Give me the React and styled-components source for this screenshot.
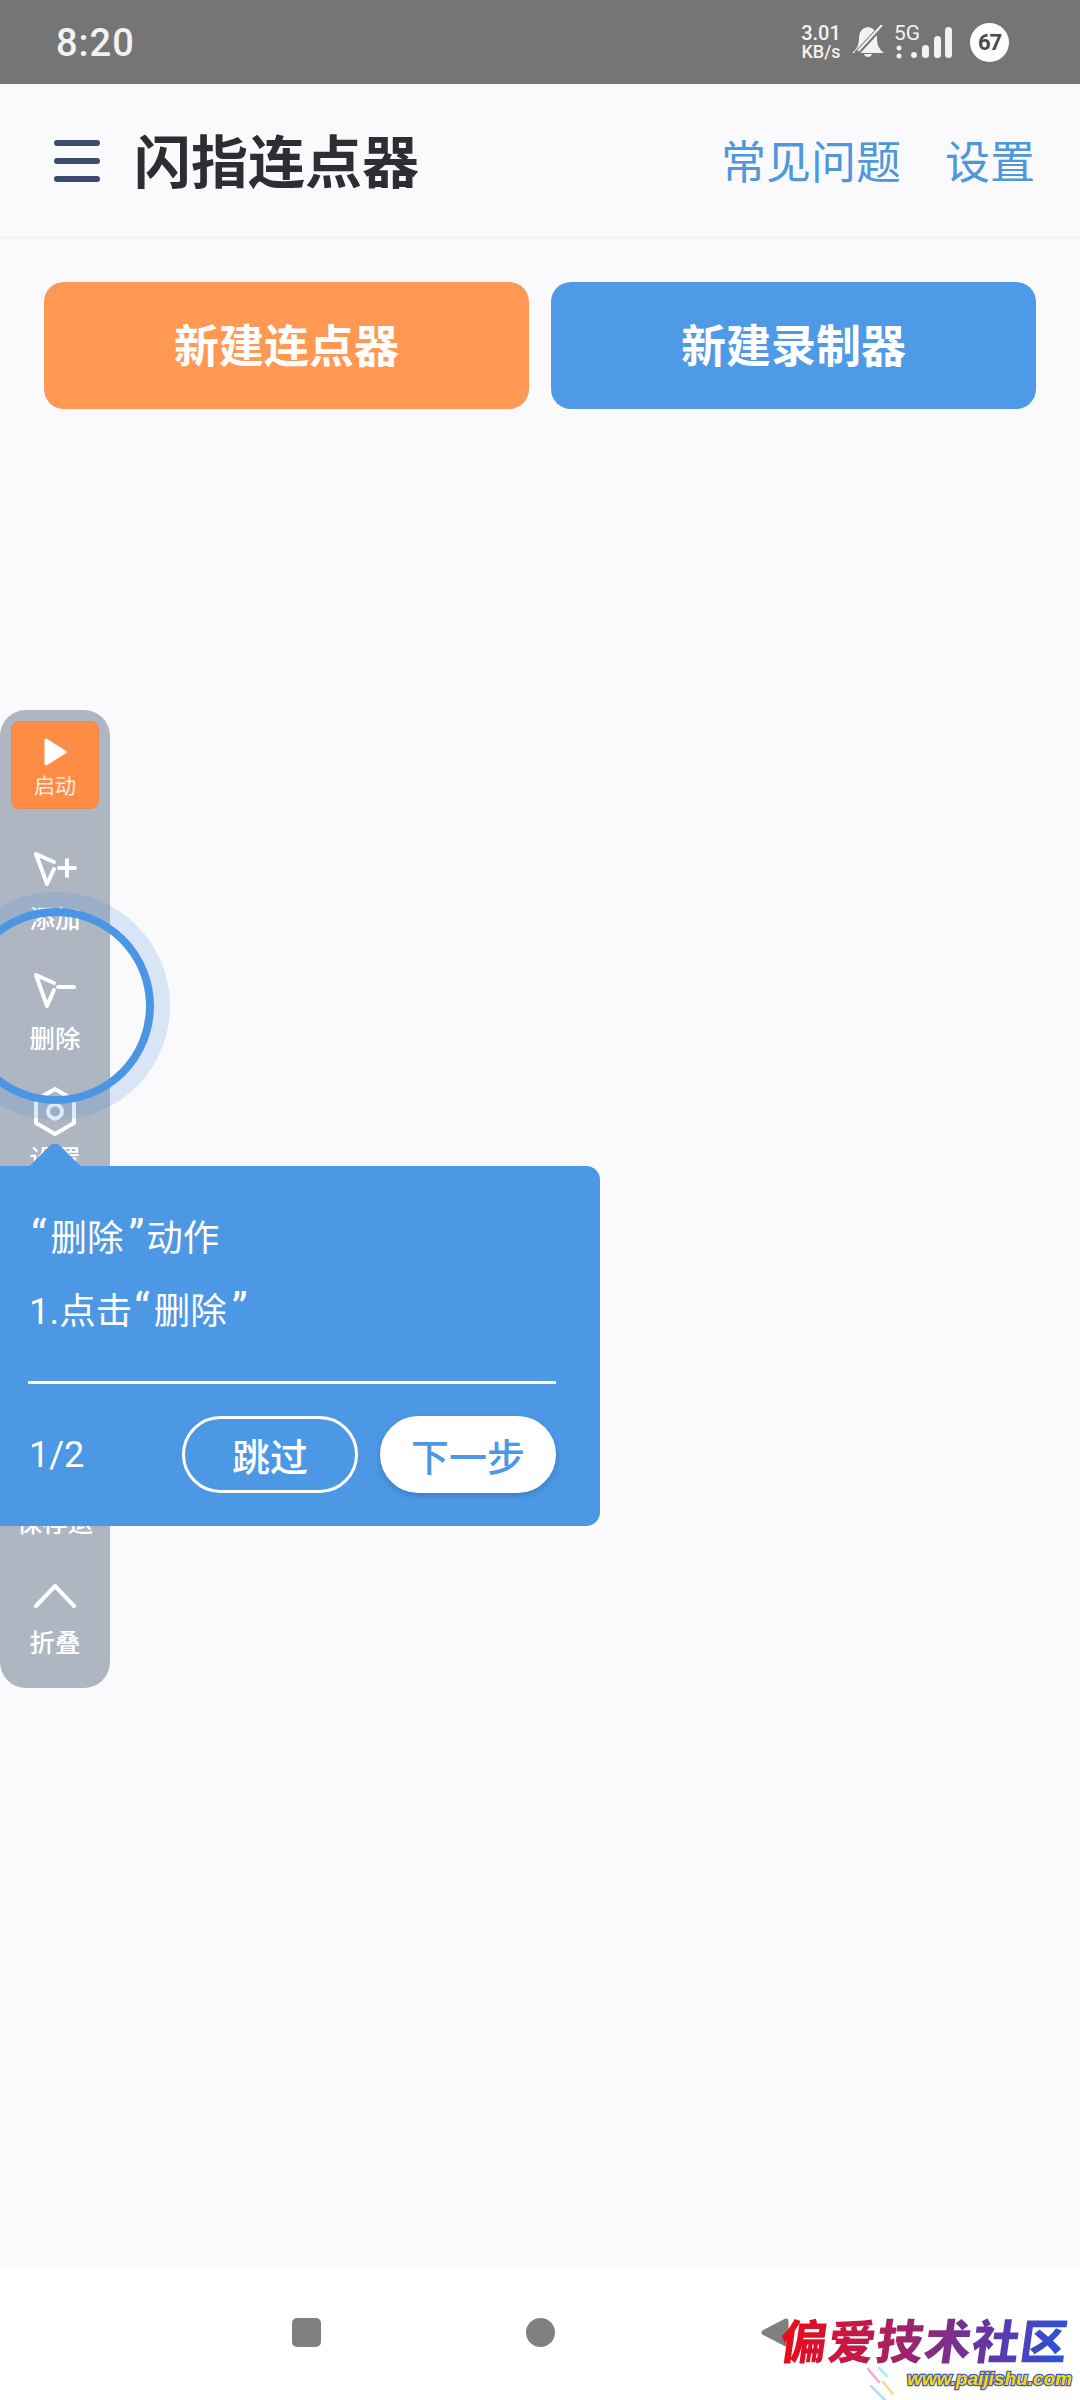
import React from "react";
import styled, { createGlobalStyle } from "styled-components";

const Global = createGlobalStyle`
  html, body { margin: 0; padding: 0; background: #fafafc; }
  * { box-sizing: border-box; }
  body { font-family: Roboto, "Noto Sans CJK SC", sans-serif; }
`;

const Screen = styled.div`
  position: relative;
  width: 1080px;
  height: 2400px;
  overflow: hidden;
  display: flex;
  flex-direction: column;
  background: #fafafc;
`;

const StatusBar = styled.div`
  height: 84px;
  flex: none;
  background: #757575;
  display: flex;
  align-items: center;
  padding: 0 71px 0 56px;
  color: #f2f2f2;
`;
const Clock = styled.div`
  font-size: 38px;
  font-weight: 500;
  letter-spacing: 1px;
  line-height: 1;
  margin-top: 1px;
`;
const StatusRight = styled.div`
  margin-left: auto;
  display: flex;
  align-items: center;
`;
const Speed = styled.div`
  display: flex;
  flex-direction: column;
  align-items: center;
  width: 42px;
  font-weight: 500;
`;
const SpeedLine = styled.span`
  font-size: ${(p) => p.$size}px;
  line-height: ${(p) => p.$lh}px;
  white-space: nowrap;
`;
const Signal = styled.div`
  position: relative;
  width: 62px;
  height: 34px;
  margin-left: 9px;
`;
const FiveG = styled.span`
  position: absolute;
  left: 0;
  top: -3px;
  font-size: 21px;
  line-height: 22px;
  color: #f2f2f2;
`;
const Battery = styled.div`
  width: 39px;
  height: 39px;
  border-radius: 50%;
  background: #fff;
  color: #4a4a4a;
  display: flex;
  align-items: center;
  justify-content: center;
  font-size: 22px;
  font-weight: 700;
  letter-spacing: -1px;
  margin-left: 14px;
`;

const Header = styled.header`
  height: 154px;
  flex: none;
  display: flex;
  align-items: center;
  padding: 0 45px 0 54px;
  border-bottom: 1px solid #efeff2;
`;
const Burger = styled.div`
  width: 46px;
  display: flex;
  flex-direction: column;
  gap: 12px;
`;
const BurgerBar = styled.span`
  height: 6px;
  border-radius: 3px;
  background: #3d4b6d;
`;
const Title = styled.h1`
  margin: 6px 0 0 34px;
  font-size: 57px;
  font-weight: 700;
  color: #2c2e31;
  line-height: 1;
`;
const Links = styled.nav`
  margin-left: auto;
  margin-top: 6px;
  display: flex;
  gap: 44px;
`;
const LinkText = styled.span`
  font-size: 45px;
  color: #4f97dd;
  line-height: 1;
`;

const Actions = styled.div`
  display: flex;
  gap: 22px;
  padding: 44px 44px 0;
`;
const ActionButton = styled.div`
  flex: 1;
  height: 127px;
  border-radius: 20px;
  background: ${(p) => p.$bg};
  color: #fff;
  font-size: 45px;
  font-weight: 700;
  display: flex;
  align-items: center;
  justify-content: center;
  padding-bottom: 5px;
`;

const Spacer = styled.div`
  flex: 1;
`;

const NavBar = styled.div`
  height: 131px;
  flex: none;
  background: #fff;
  display: flex;
  justify-content: center;
  gap: 205px;
  padding-top: 49px;
`;
const NavSquare = styled.div`
  width: 29px;
  height: 29px;
  border-radius: 5px;
  background: #808080;
`;
const NavCircle = styled(NavSquare)`
  border-radius: 50%;
`;
const NavIcon = styled.svg`
  width: 29px;
  height: 29px;
`;

const Toolbar = styled.aside`
  position: absolute;
  left: 0;
  top: 710px;
  width: 110px;
  height: 978px;
  border-radius: 26px;
  background: #aeb6c2;
  padding-top: 11px;
  display: flex;
  flex-direction: column;
  align-items: center;
`;
const StartButton = styled.div`
  width: 88px;
  height: 88px;
  flex: none;
  border-radius: 8px;
  background: #ff8c45;
  border: 1px solid #e98a50;
  color: #ffeee2;
  display: flex;
  flex-direction: column;
  align-items: center;
  padding-top: 15px;
  margin-bottom: 34px;
`;
const StartLabel = styled.span`
  font-size: 21px;
  line-height: 26px;
  margin-top: 6px;
`;
const ToolItem = styled.div`
  width: 100%;
  height: 120px;
  flex: none;
  display: flex;
  flex-direction: column;
  align-items: center;
  padding-top: 6px;
  color: #fff;
`;
const ToolIcon = styled.svg`
  width: 44px;
  height: 48px;
  flex: none;
  fill: none;
  stroke: #fff;
  stroke-width: 4;
  stroke-linecap: round;
  stroke-linejoin: round;
`;
const ToolLabel = styled.span`
  font-size: 25.5px;
  font-weight: 500;
  line-height: 34px;
  white-space: nowrap;
  margin-top: ${(p) => p.$top ?? 5}px;
`;
const ToolGap = styled.div`
  height: 240px;
  flex: none;
`;

const Halo = styled.div`
  position: absolute;
  left: -58px;
  top: 892px;
  width: 228px;
  height: 228px;
  border-radius: 50%;
  border: 16px solid rgba(74, 144, 226, 0.2);
`;
const Ring = styled.div`
  position: absolute;
  left: -42px;
  top: 908px;
  width: 196px;
  height: 196px;
  border-radius: 50%;
  border: 8px solid #4b96e4;
`;

const Tooltip = styled.section`
  position: absolute;
  left: 0;
  top: 1166px;
  width: 600px;
  height: 360px;
  background: #4d98e5;
  border-radius: 0 14px 14px 0;
  color: #fff;
  padding: 47px 44px 0 28px;
  display: flex;
  flex-direction: column;
`;
const TooltipArrow = styled.div`
  position: absolute;
  left: 37px;
  top: -18px;
  width: 36px;
  height: 36px;
  background: #4d98e5;
  border-radius: 8px 0 0 0;
  transform: rotate(45deg);
`;
const TipLine = styled.div`
  font-size: 36.5px;
  line-height: 52px;
  height: 73px;
  padding-left: 1px;
  white-space: nowrap;
`;
const Quote = styled.span`
  margin: ${(p) => (p.$close ? "0 2px 0 5px" : "0 4px 0 2px")};
  font-size: 44px;
  line-height: 1;
`;
const Divider = styled.div`
  height: 3px;
  background: #fff;
  margin-top: 22px;
`;
const TipFooter = styled.div`
  display: flex;
  align-items: center;
  margin-top: 32px;
  font-size: 36px;
`;
const Counter = styled.span`
  padding-left: 1px;
  margin-right: auto;
`;
const Pill = styled.div`
  width: 176px;
  height: 77px;
  border-radius: 39px;
  display: flex;
  align-items: center;
  justify-content: center;
  font-size: 38px;
  font-weight: 500;
  border: 3px solid #fff;
  background: ${(p) => (p.$solid ? "#fff" : "transparent")};
  color: ${(p) => (p.$solid ? "#4d98e5" : "#fff")};
  box-shadow: ${(p) => (p.$solid ? "0 3px 6px rgba(30,60,110,.3)" : "none")};
  margin-left: ${(p) => (p.$solid ? "22px" : "0")};
`;

const Watermark = styled.div`
  position: absolute;
  left: 781px;
  top: 2309px;
  width: 296px;
`;
const MarkName = styled.div`
  font-family: "Noto Sans CJK SC", sans-serif;
  font-size: 47px;
  font-weight: 900;
  line-height: 60px;
  letter-spacing: 1px;
  white-space: nowrap;
  transform: skewX(-8deg);
  background: linear-gradient(90deg, #ee0a14 0%, #c01a4c 28%, #8c2a7c 50%, #5a3ab0 75%, #2058e0 100%);
  -webkit-background-clip: text;
  background-clip: text;
  color: transparent;
`;
const MarkUrl = styled.div`
  position: absolute;
  right: 5px;
  top: 60px;
  font-family: "Liberation Sans", sans-serif;
  font-size: 19px;
  font-weight: 700;
  font-style: italic;
  line-height: 20px;
  color: #ffd800;
  -webkit-text-stroke: 2.5px #3560c8;
  paint-order: stroke fill;
  white-space: nowrap;
`;
const MarkStreaks = styled.svg`
  position: absolute;
  left: 84px;
  top: 57px;
  width: 30px;
  height: 40px;
  fill: none;
  stroke-width: 2.5;
  stroke-linecap: round;
`;

const ArrowPlus = () => (
  <ToolIcon viewBox="0 0 44 48">
    <path d="M21 13 L3 5 L14 35 L21 20" />
    <path d="M26 19 H42 M34 11 V27" />
  </ToolIcon>
);
const ArrowMinus = () => (
  <ToolIcon viewBox="0 0 44 48">
    <path d="M21 14 L3 6 L14 37 L21 21" />
    <path d="M25 18 H41" />
  </ToolIcon>
);
const HexIcon = () => (
  <ToolIcon viewBox="0 0 44 48" style={{ overflow: "visible" }}>
    <path d="M22 0 L41 11 V34 L22 45 L3 34 V11 Z" />
    <circle cx="22" cy="22.5" r="7" />
  </ToolIcon>
);
const ChevronIcon = () => (
  <ToolIcon viewBox="0 0 44 48">
    <path d="M3 37 L22 17 L41 37" />
  </ToolIcon>
);

export default function App() {
  return (
    <Screen>
      <Global />
      <StatusBar>
        <Clock>8:20</Clock>
        <StatusRight>
          <Speed>
            <SpeedLine $size={20} $lh={20}>3.01</SpeedLine>
            <SpeedLine $size={18} $lh={18}>KB/s</SpeedLine>
          </Speed>
          <svg width="34" height="34" viewBox="0 0 34 34" style={{ marginLeft: 9 }}>
            <path
              d="M17 2 C23 3 26 7 26 13 C26 20 28 24 33 28 L1 28 C6 24 8 20 8 13 C8 7 11 3 17 2 Z M13 29 H21 C20 33 14 33 13 29 Z"
              fill="#f2f2f2"
            />
            <path d="M5 29 L31 1" stroke="#757575" strokeWidth="5" />
            <path d="M7 26 L31 0" stroke="#f2f2f2" strokeWidth="2" />
          </svg>
          <Signal>
            <FiveG>5G</FiveG>
            <svg width="62" height="34" viewBox="0 0 62 34">
              <circle cx="5" cy="23" r="2.5" fill="#f2f2f2" />
              <circle cx="5" cy="31" r="2.5" fill="#f2f2f2" />
              <circle cx="20" cy="30" r="3" fill="#f2f2f2" />
              <rect x="28" y="20" width="7" height="13" rx="3.5" fill="#f2f2f2" />
              <rect x="40" y="11" width="7" height="22" rx="3.5" fill="#f2f2f2" />
              <rect x="51" y="2" width="7" height="31" rx="3.5" fill="#f2f2f2" />
            </svg>
          </Signal>
          <Battery>67</Battery>
        </StatusRight>
      </StatusBar>

      <Header>
        <Burger>
          <BurgerBar />
          <BurgerBar />
          <BurgerBar />
        </Burger>
        <Title>闪指连点器</Title>
        <Links>
          <LinkText>常见问题</LinkText>
          <LinkText>设置</LinkText>
        </Links>
      </Header>

      <Actions>
        <ActionButton $bg="#ff9853">新建连点器</ActionButton>
        <ActionButton $bg="#4f9ae6">新建录制器</ActionButton>
      </Actions>

      <Spacer />

      <NavBar>
        <NavSquare />
        <NavCircle />
        <NavIcon viewBox="0 0 29 29">
          <path d="M4 14.5 L26 3 V26 Z" fill="#808080" stroke="#808080" strokeWidth="5" strokeLinejoin="round" />
        </NavIcon>
      </NavBar>

      <Toolbar>
        <StartButton>
          <svg width="26" height="30" viewBox="0 0 26 30">
            <path d="M4 3 L23 15 L4 27 Z" fill="#fff" stroke="#fff" strokeWidth="3" strokeLinejoin="round" />
          </svg>
          <StartLabel>启动</StartLabel>
        </StartButton>
        <ToolItem>
          <ArrowPlus />
          <ToolLabel>添加</ToolLabel>
        </ToolItem>
        <ToolItem>
          <ArrowMinus />
          <ToolLabel>删除</ToolLabel>
        </ToolItem>
        <ToolItem>
          <HexIcon />
          <ToolLabel>设置</ToolLabel>
        </ToolItem>
        <ToolGap />
        <ToolItem>
          <ToolLabel $top={57}>保存退</ToolLabel>
        </ToolItem>
        <ToolItem>
          <ChevronIcon />
          <ToolLabel $top={9}>折叠</ToolLabel>
        </ToolItem>
      </Toolbar>

      <Halo />
      <Ring />

      <Tooltip>
        <TooltipArrow />
        <TipLine>
          <Quote>“</Quote>删除<Quote $close>”</Quote>动作
        </TipLine>
        <TipLine>
          1.点击<Quote>“</Quote>删除<Quote $close>”</Quote>
        </TipLine>
        <Divider />
        <TipFooter>
          <Counter>1/2</Counter>
          <Pill>跳过</Pill>
          <Pill $solid>下一步</Pill>
        </TipFooter>
      </Tooltip>

      <Watermark>
        <MarkName>偏爱技术社区</MarkName>
        <MarkStreaks viewBox="0 0 30 40">
          <path d="M3 3 L14 16" stroke="#f5a8e0" />
          <path d="M14 2 L22 10" stroke="#a8f0f0" />
          <path d="M6 20 L20 34" stroke="#b8d8f5" />
          <path d="M18 16 L28 28" stroke="#f5dc9a" />
        </MarkStreaks>
        <MarkUrl>www.paijishu.com</MarkUrl>
      </Watermark>
    </Screen>
  );
}
